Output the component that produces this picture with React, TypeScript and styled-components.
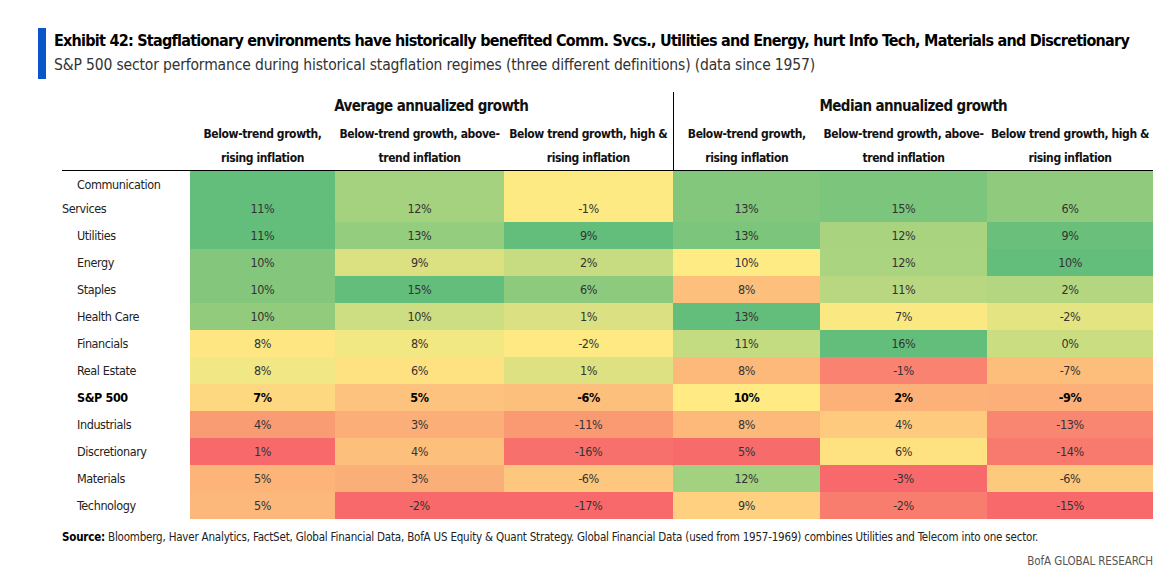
import styled, { createGlobalStyle } from 'styled-components';

const FONT = `"Liberation Sans Narrow", "DejaVu Sans Condensed", "Roboto Condensed", Roboto, sans-serif`;

const GlobalStyle = createGlobalStyle`
  html, body {
    margin: 0;
    padding: 0;
    background: #fff;
  }
  body {
    font-family: ${FONT};
    font-stretch: condensed;
    color: #222;
  }
`;

// ── Data ───────────────────────────────────────────────────────────────────
type Cell = [string, string];

interface Row {
  label: string;
  cells: Cell[];
  bold?: boolean;
  wrap?: boolean;
}

const ROWS: Row[] = [
  {
    label: 'Communication Services',
    wrap: true,
    cells: [
      ['11%', '#63BE7B'], ['12%', '#A5D27F'], ['-1%', '#FEEA83'],
      ['13%', '#82C77C'], ['15%', '#7BC57C'], ['6%', '#8FCA7D'],
    ],
  },
  {
    label: 'Utilities',
    cells: [
      ['11%', '#63BE7B'], ['13%', '#94CD7E'], ['9%', '#63BE7B'],
      ['13%', '#7BC57C'], ['12%', '#AAD380'], ['9%', '#6AC07B'],
    ],
  },
  {
    label: 'Energy',
    cells: [
      ['10%', '#84C77C'], ['9%', '#DBE081'], ['2%', '#C7DB81'],
      ['10%', '#FFEB84'], ['12%', '#ABD480'], ['10%', '#63BE7B'],
    ],
  },
  {
    label: 'Staples',
    cells: [
      ['10%', '#84C77C'], ['15%', '#63BE7B'], ['6%', '#8DCA7D'],
      ['8%', '#FDBF7C'], ['11%', '#B9D780'], ['2%', '#B4D680'],
    ],
  },
  {
    label: 'Health Care',
    cells: [
      ['10%', '#93CB7D'], ['10%', '#CDDD81'], ['1%', '#DBE182'],
      ['13%', '#63BE7B'], ['7%', '#FAE983'], ['-2%', '#E4E483'],
    ],
  },
  {
    label: 'Financials',
    cells: [
      ['8%', '#FEE683'], ['8%', '#F1E783'], ['-2%', '#FEE983'],
      ['11%', '#C3DB81'], ['16%', '#63BE7B'], ['0%', '#CBDD81'],
    ],
  },
  {
    label: 'Real Estate',
    cells: [
      ['8%', '#F1E784'], ['6%', '#FEE282'], ['1%', '#DDE182'],
      ['8%', '#FDB97A'], ['-1%', '#F98270'], ['-7%', '#FDBE7B'],
    ],
  },
  {
    label: 'S&P 500',
    bold: true,
    cells: [
      ['7%', '#FED781'], ['5%', '#FDC27D'], ['-6%', '#FDBF7C'],
      ['10%', '#FFEA84'], ['2%', '#FCB179'], ['-9%', '#FCAF78'],
    ],
  },
  {
    label: 'Industrials',
    cells: [
      ['4%', '#FA9C73'], ['3%', '#FBAE78'], ['-11%', '#FA9A73'],
      ['8%', '#FDB97A'], ['4%', '#FECB7E'], ['-13%', '#F98670'],
    ],
  },
  {
    label: 'Discretionary',
    cells: [
      ['1%', '#F8696B'], ['4%', '#FDBF7C'], ['-16%', '#F8706C'],
      ['5%', '#F86B6B'], ['6%', '#FEE282'], ['-14%', '#F87A6E'],
    ],
  },
  {
    label: 'Materials',
    cells: [
      ['5%', '#FCB479'], ['3%', '#FBAF78'], ['-6%', '#FDC77D'],
      ['12%', '#A2D17F'], ['-3%', '#F8696B'], ['-6%', '#FDCA7D'],
    ],
  },
  {
    label: 'Technology',
    cells: [
      ['5%', '#FCB77A'], ['-2%', '#F8696B'], ['-17%', '#F8696B'],
      ['9%', '#FED07F'], ['-2%', '#F97D6F'], ['-15%', '#F8696B'],
    ],
  },
];

const COL_WIDTHS = [128, 145, 169, 169, 147, 167, 166];

const SUB_HEADS: [string, string][] = [
  ['Below-trend growth,', 'rising inflation'],
  ['Below-trend growth, above-', 'trend inflation'],
  ['Below trend growth, high &', 'rising inflation'],
  ['Below-trend growth,', 'rising inflation'],
  ['Below-trend growth, above-', 'trend inflation'],
  ['Below trend growth, high &', 'rising inflation'],
];

// ── Layout ─────────────────────────────────────────────────────────────────
const Page = styled.div`
  padding: 28px 0 0 38px;
`;

const Header = styled.header`
  display: flex;
  gap: 8px;
`;

const Bar = styled.div`
  flex: 0 0 8px;
  width: 8px;
  background: #0a56c8;
`;

const HeaderText = styled.div`
  display: flex;
  flex-direction: column;
  padding: 1px 0 2px;
`;

const Title = styled.h1`
  margin: 0;
  font-size: 16px;
  line-height: 24px;
  letter-spacing: -0.75px;
  font-weight: 700;
  color: #000;
  white-space: nowrap;
`;

const Subtitle = styled.p`
  margin: 0;
  font-size: 15.5px;
  line-height: 24px;
  letter-spacing: -0.15px;
  font-weight: 400;
  color: #333;
  white-space: nowrap;
`;

const Body = styled.div`
  margin: 13px 0 0 24px;
  width: 1091px;
`;

// ── Table ──────────────────────────────────────────────────────────────────
const Table = styled.table`
  border-collapse: collapse;
  border-spacing: 0;
  table-layout: fixed;
  width: 1091px;
`;

const Col = styled.col<{ $w: number }>`
  width: ${(p) => p.$w}px;
`;

const GroupTh = styled.th<{ $divider?: boolean }>`
  padding: 0;
  height: 28px;
  line-height: 28px;
  font-size: 15px;
  letter-spacing: -0.6px;
  font-weight: 700;
  color: #111;
  text-align: center;
  border-left: ${(p) => (p.$divider ? '1px solid #000' : 'none')};
`;

const SubTh = styled.th<{ $divider?: boolean }>`
  padding: 2px 0 0;
  font-size: 12px;
  line-height: 24px;
  letter-spacing: -0.4px;
  font-weight: 700;
  color: #111;
  text-align: center;
  white-space: nowrap;
  border-bottom: 1px solid #000;
  border-left: ${(p) => (p.$divider ? '1px solid #000' : 'none')};
`;

const LabelTd = styled.td<{ $bold?: boolean }>`
  padding: 2px 0 1px;
  font-size: 12.5px;
  line-height: 24px;
  letter-spacing: -0.4px;
  font-weight: ${(p) => (p.$bold ? 700 : 400)};
  color: ${(p) => (p.$bold ? '#000' : '#222')};
  text-indent: 15px;
  vertical-align: bottom;
`;

const ValueTd = styled.td<{ $bg: string; $bold?: boolean }>`
  padding: 2px 0 1px;
  background: ${(p) => p.$bg};
  font-size: 12.5px;
  line-height: 24px;
  letter-spacing: -0.4px;
  font-weight: ${(p) => (p.$bold ? 700 : 400)};
  color: ${(p) => (p.$bold ? '#000' : '#333')};
  text-align: center;
  vertical-align: bottom;
`;

// ── Footer ─────────────────────────────────────────────────────────────────
const Source = styled.p`
  margin: 9px 0 0;
  font-size: 11.5px;
  line-height: 18px;
  letter-spacing: -0.2px;
  color: #222;
  white-space: nowrap;

  b {
    font-weight: 700;
    color: #000;
  }
`;

const Credit = styled.p`
  margin: 6px 0 0;
  font-size: 11.5px;
  line-height: 18px;
  letter-spacing: -0.1px;
  color: #555;
  text-align: right;
`;

export default function App() {
  return (
    <>
      <GlobalStyle />
      <Page>
        <Header>
          <Bar />
          <HeaderText>
            <Title>
              Exhibit 42: Stagflationary environments have historically benefited Comm. Svcs., Utilities and
              Energy, hurt Info Tech, Materials and Discretionary
            </Title>
            <Subtitle>
              S&amp;P 500 sector performance during historical stagflation regimes (three different definitions)
              (data since 1957)
            </Subtitle>
          </HeaderText>
        </Header>

        <Body>
          <Table>
            <colgroup>
              {COL_WIDTHS.map((w, i) => (
                <Col key={i} $w={w} />
              ))}
            </colgroup>
            <thead>
              <tr>
                <GroupTh />
                <GroupTh colSpan={3}>Average annualized growth</GroupTh>
                <GroupTh colSpan={3} $divider>
                  Median annualized growth
                </GroupTh>
              </tr>
              <tr>
                <SubTh />
                {SUB_HEADS.map(([a, b], i) => (
                  <SubTh key={i} $divider={i === 3}>
                    {a}
                    <br />
                    {b}
                  </SubTh>
                ))}
              </tr>
            </thead>
            <tbody>
              {ROWS.map((row) => (
                <tr key={row.label}>
                  <LabelTd $bold={row.bold}>
                    {row.wrap ? (
                      <>
                        Communication
                        <br />
                        Services
                      </>
                    ) : (
                      row.label
                    )}
                  </LabelTd>
                  {row.cells.map(([v, bg], i) => (
                    <ValueTd key={i} $bg={bg} $bold={row.bold}>
                      {v}
                    </ValueTd>
                  ))}
                </tr>
              ))}
            </tbody>
          </Table>

          <Source>
            <b>Source:</b> Bloomberg, Haver Analytics, FactSet, Global Financial Data, BofA US Equity &amp; Quant
            Strategy. Global Financial Data (used from 1957-1969) combines Utilities and Telecom into one sector.
          </Source>
          <Credit>BofA GLOBAL RESEARCH</Credit>
        </Body>
      </Page>
    </>
  );
}
